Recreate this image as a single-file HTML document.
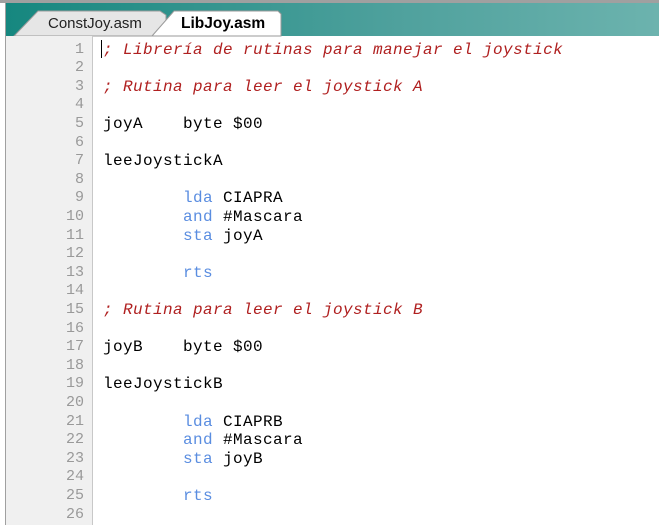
<!DOCTYPE html>
<html><head><style>
body{margin:0;width:659px;height:525px;overflow:hidden;background:#fff;position:relative;font-family:"Liberation Sans",sans-serif}
#top{position:absolute;left:0;top:0;width:659px;height:3px;background:#a0a0a0}
#lb{position:absolute;left:5px;top:0;width:1px;height:525px;background:#a0a0a0}
#bar{position:absolute;left:6px;top:3px;width:653px;height:33px;background:linear-gradient(90deg,#16877f,#4fa19d 60%,#6cb3ae)}
#gut{position:absolute;left:6px;top:36px;width:86px;height:489px;background:#f0f0f0;border-right:1px solid #c8c8c8}
.ln{position:absolute;left:6px;width:78px;text-align:right;font:15px "Liberation Mono",monospace;color:#999;height:18.6px;line-height:18.6px}
.cl{position:absolute;left:103px;font:16px "Liberation Mono",monospace;letter-spacing:0.4px;white-space:pre;height:18.6px;line-height:18.6px;color:#000}
.c{color:#b02020;font-style:italic}.k{color:#5a8de0}
</style></head><body>
<div id="top"></div><div id="lb"></div><div id="bar"></div>
<svg style="position:absolute;left:0;top:0" width="300" height="37">
<path d="M14 36 L38 11 L160 11 L166 15 L166 36Z" fill="#e6e6e6" stroke="#9a9a9a"/>
<path d="M152 36 L174 11 L278 11 L281 14 L281 36Z" fill="#fff" stroke="#9a9a9a"/>
<text x="48" y="28" font-family="Liberation Sans" font-size="15" fill="#222">ConstJoy.asm</text>
<text x="181" y="28" font-family="Liberation Sans" font-size="15.5" font-weight="bold" fill="#000">LibJoy.asm</text>
</svg>
<div id="gut"></div>
<div style="position:absolute;left:101px;top:40px;width:1px;height:18px;background:#000"></div>
<div id="lines"></div>
<script>
var L=["<span class=c>; Librería de rutinas para manejar el joystick</span>","","<span class=c>; Rutina para leer el joystick A</span>","","joyA    byte $00","","leeJoystickA","","        <span class=k>lda</span> CIAPRA","        <span class=k>and</span> #Mascara","        <span class=k>sta</span> joyA","","        <span class=k>rts</span>","","<span class=c>; Rutina para leer el joystick B</span>","","joyB    byte $00","","leeJoystickB","","        <span class=k>lda</span> CIAPRB","        <span class=k>and</span> #Mascara","        <span class=k>sta</span> joyB","","        <span class=k>rts</span>",""];
var h="";for(var i=0;i<26;i++){var t=40.5+i*18.6;h+='<div class=ln style="top:'+t+'px">'+(i+1)+'</div><div class=cl style="top:'+t+'px">'+L[i]+'</div>';}
document.getElementById("lines").innerHTML=h;
</script>
</body></html>
